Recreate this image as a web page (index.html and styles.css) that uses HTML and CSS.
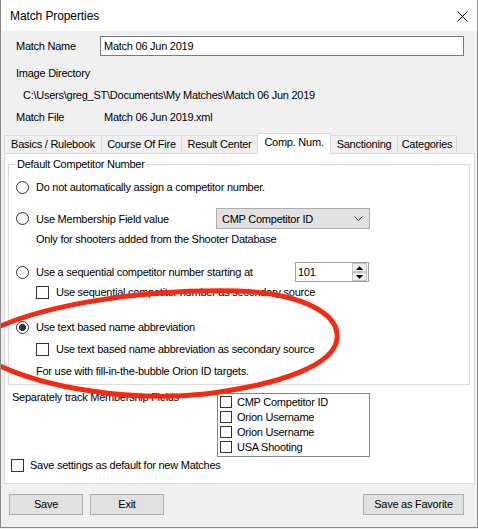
FILE: index.html
```html
<!DOCTYPE html>
<html lang="en">
<head>
    <meta charset="UTF-8">
    <title>Match Properties</title>
    <link rel="stylesheet" href="styles.css">
</head>
<body>
<div class="window">
    <div class="titlebar">
        <span class="title">Match Properties</span>
        <svg class="close" width="11" height="11" viewBox="0 0 11 11"><path d="M0.5 0.5 L10.5 10.5 M10.5 0.5 L0.5 10.5" stroke="#000" stroke-width="1" fill="none"/></svg>
    </div>

    <div class="header">
        <div class="field-row">
            <span class="field-label">Match Name</span>
            <div class="textbox">Match 06 Jun 2019</div>
        </div>
        <div class="field-row dir-row">Image Directory</div>
        <div class="field-row path-row">C:\Users\greg_ST\Documents\My Matches\Match 06 Jun 2019</div>
        <div class="field-row">
            <span class="field-label file-label">Match File</span>
            <span>Match 06 Jun 2019.xml</span>
        </div>
    </div>

    <div class="tabs">
        <div class="tab tab-basics">Basics / Rulebook</div>
        <div class="tab tab-course">Course Of Fire</div>
        <div class="tab tab-result">Result Center</div>
        <div class="tab tab-comp active">Comp. Num.</div>
        <div class="tab tab-sanction">Sanctioning</div>
        <div class="tab tab-categories">Categories</div>
    </div>

    <div class="panel">
        <fieldset class="group">
            <legend>Default Competitor Number</legend>

            <div class="opt-row row-1">
                <span class="radio"></span>Do not automatically assign a competitor number.
            </div>

            <div class="opt-row row-2">
                <div class="opt-main member-main"><span class="radio"></span>Use Membership Field value</div>
                <div class="combo">
                    <span>CMP Competitor ID</span>
                    <svg width="9" height="5" viewBox="0 0 9 5"><path d="M0.5 0.5 L4.5 4.5 L8.5 0.5" stroke="#333" fill="none"/></svg>
                </div>
            </div>

            <div class="opt-row indent row-3">Only for shooters added from the Shooter Database</div>

            <div class="opt-row row-4">
                <div class="opt-main seq-main"><span class="radio"></span>Use a sequential competitor number starting at</div>
                <div class="spinner">
                    <span class="spin-value">101</span>
                    <div class="spin-buttons">
                        <div class="spin-btn"><svg width="7" height="4" viewBox="0 0 7 4"><path d="M3.5 0 L7 4 L0 4 Z" fill="#000"/></svg></div>
                        <div class="spin-btn"><svg width="7" height="4" viewBox="0 0 7 4"><path d="M0 0 L7 0 L3.5 4 Z" fill="#000"/></svg></div>
                    </div>
                </div>
            </div>

            <div class="opt-row indent row-5">
                <span class="box"></span>Use sequential competitor number as secondary source
            </div>

            <div class="opt-row row-6">
                <span class="radio checked"></span>Use text based name abbreviation
            </div>

            <div class="opt-row indent row-7">
                <span class="box"></span>Use text based name abbreviation as secondary source
            </div>

            <div class="opt-row indent row-8">For use with fill-in-the-bubble Orion ID targets.</div>
        </fieldset>

        <div class="track-row">
            <span class="track-label">Separately track Membership Fields</span>
            <div class="listbox">
                <div class="list-item"><span class="box small"></span>CMP Competitor ID</div>
                <div class="list-item"><span class="box small"></span>Orion Username</div>
                <div class="list-item"><span class="box small"></span>Orion Username</div>
                <div class="list-item"><span class="box small"></span>USA Shooting</div>
            </div>
        </div>

        <div class="save-row">
            <span class="box"></span>Save settings as default for new Matches
        </div>
    </div>

    <div class="buttons">
        <div class="button btn-save">Save</div>
        <div class="button btn-exit">Exit</div>
        <div class="button btn-favorite">Save as Favorite</div>
    </div>

    <svg class="annotation" width="478" height="529" viewBox="0 0 478 529">
        <path d="M -12,332 C 40,305 140,289 238,291 C 300,293 340,313 337,339 C 334,364 285,384 205,394 C 130,402 40,388 -12,360"
              fill="none" stroke="#f42a12" stroke-width="5" stroke-linecap="round"/>
    </svg>
</div>
</body>
</html>
```

FILE: styles.css
```css
body {
    margin: 0;
    font-family: "Liberation Sans", Arial, sans-serif;
    font-size: 11px;
    letter-spacing: -0.25px;
    color: #000;
    background: #f0f0f0;
}

.window {
    position: relative;
    width: 478px;
    height: 528px;
    box-sizing: border-box;
    border: 1px solid #8a8a8a;
    border-top: none;
    background: #f0f0f0;
    overflow: hidden;
}

/* title bar */
.titlebar {
    height: 31px;
    background: #fff;
    display: flex;
    align-items: center;
    justify-content: space-between;
    padding: 0 9px 0 9px;
}
.title {
    font-size: 12px;
    letter-spacing: -0.1px;
}
.close {
    margin-top: 1px;
}

/* header fields */
.header {
    padding: 5px 0 0 15px;
}
.field-row {
    display: flex;
    align-items: center;
    height: 20px;
    line-height: 20px;
}
.field-label {
    width: 84px;
    flex-shrink: 0;
}
.file-label {
    width: 88px;
}
.textbox {
    width: 364px;
    height: 20px;
    box-sizing: border-box;
    border: 1px solid #7a7a7a;
    background: #fff;
    padding-left: 3px;
    line-height: 18px;
}
.dir-row {
    margin-top: 7px;
}
.path-row {
    margin-top: 2px;
    padding-left: 7px;
}
.path-row + .field-row {
    margin-top: 2px;
}

/* tabs */
.tabs {
    display: flex;
    align-items: flex-end;
    height: 20px;
    margin-top: 6px;
    padding-left: 3px;
    position: relative;
    z-index: 1;
}
.tab {
    height: 18px;
    box-sizing: border-box;
    border-top: 1px solid #d9d9d9;
    border-left: 1px solid #d9d9d9;
    background: #f0f0f0;
    text-align: center;
    line-height: 17px;
    white-space: nowrap;
}
.tab-basics { width: 97px; }
.tab-course { width: 80px; }
.tab-result { width: 76px; }
.tab-comp { width: 74px; }
.tab-sanction { width: 66px; border-left: none; }
.tab-categories { width: 60px; border-right: 1px solid #d9d9d9; }
.tab.active {
    height: 21px;
    margin-bottom: -1px;
    background: #fff;
    border-right: 1px solid #d9d9d9;
    line-height: 17px;
    padding-bottom: 3px;
}

/* tab page */
.panel {
    margin-left: 3px;
    width: 471px;
    height: 331px;
    box-sizing: border-box;
    border: 1px solid #d9d9d9;
    background: #fff;
    padding: 3px 4px 0 3px;
}
.group {
    margin: 0;
    min-width: 0;
    padding: 0 0 3px 7px;
    border: 1px solid #dcdcdc;
}
.group legend {
    padding: 0 1px;
    line-height: 14px;
}

.opt-row {
    display: flex;
    align-items: center;
    height: 20px;
    white-space: nowrap;
}
.opt-main {
    display: flex;
    align-items: center;
    flex-shrink: 0;
}
.member-main { width: 200px; }
.seq-main { width: 279px; }
.indent { margin-left: 20px; }
.row-1 { margin-top: 6px; }
.row-2 { margin-top: 11px; height: 21px; }
.row-3 { margin-top: 0; }
.row-4 { margin-top: 13px; }
.row-5 { margin-top: 0; }
.row-6 { margin-top: 15px; }
.row-7 { margin-top: 2px; }
.row-8 { margin-top: 2px; }

.radio {
    width: 13px;
    height: 13px;
    box-sizing: border-box;
    border: 1px solid #333;
    border-radius: 50%;
    background: #fff;
    margin-right: 7px;
    flex-shrink: 0;
}
.radio.checked {
    background: radial-gradient(circle, #333 3.2px, #fff 3.8px);
}
.box {
    width: 13px;
    height: 13px;
    box-sizing: border-box;
    border: 1px solid #333;
    background: #fff;
    margin-right: 7px;
    flex-shrink: 0;
}
.box.small {
    width: 12px;
    height: 12px;
    margin-right: 5px;
}

.combo {
    width: 154px;
    height: 21px;
    box-sizing: border-box;
    border: 1px solid #adadad;
    background: #e1e1e1;
    display: flex;
    align-items: center;
    justify-content: space-between;
    padding: 0 6px 0 5px;
}

.spinner {
    width: 74px;
    height: 20px;
    box-sizing: border-box;
    border: 1px solid #a0a0a0;
    background: #fff;
    display: flex;
    align-items: center;
    justify-content: space-between;
    padding-left: 2px;
}
.spin-buttons {
    width: 15px;
    height: 18px;
    display: flex;
    flex-direction: column;
    margin-right: 1px;
}
.spin-btn {
    flex: 1;
    box-sizing: border-box;
    border: 1px solid #c4c4c4;
    background: #ececec;
    display: flex;
    align-items: center;
    justify-content: center;
}

/* membership fields */
.track-row {
    display: flex;
    margin-top: 5px;
}
.track-label {
    width: 205px;
    padding-left: 4px;
    line-height: 14px;
    white-space: nowrap;
}
.listbox {
    width: 153px;
    height: 64px;
    box-sizing: border-box;
    margin-top: 3px;
    border: 1px solid #828790;
    background: #fff;
    padding-left: 2px;
}
.list-item {
    display: flex;
    align-items: center;
    height: 15px;
}

.save-row {
    display: flex;
    align-items: center;
    height: 14px;
    margin-top: 1px;
    margin-left: 3px;
}
.save-row .box {
    margin-right: 6px;
}

/* bottom buttons */
.buttons {
    display: flex;
    margin-top: 10px;
    padding: 0 13px 0 8px;
}
.button {
    height: 21px;
    box-sizing: border-box;
    border: 1px solid #adadad;
    background: #e1e1e1;
    text-align: center;
    line-height: 19px;
}
.btn-save { width: 74px; }
.btn-exit { width: 74px; margin-left: 7px; }
.btn-favorite { width: 101px; margin-left: auto; }

.annotation {
    position: absolute;
    left: -1px;
    top: 0;
    pointer-events: none;
}
```
